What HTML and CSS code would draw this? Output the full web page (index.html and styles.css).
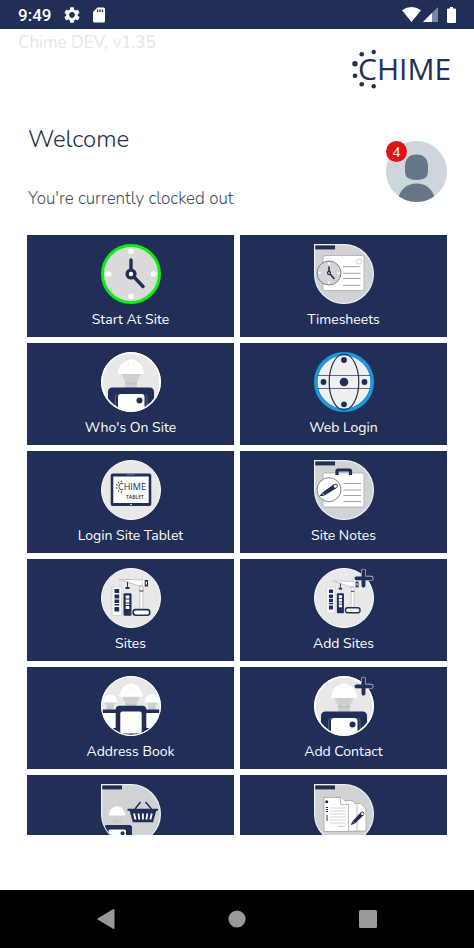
FILE: index.html
```html
<!DOCTYPE html>
<html lang="en">
<head>
    <meta charset="UTF-8">
    <meta name="viewport" content="width=device-width, initial-scale=1.0">
    <title>Chime</title>
    <link rel="stylesheet" href="styles.css">
</head>
<body>

<!-- Shared icon parts -->
<svg class="defs" width="0" height="0" aria-hidden="true">
    <defs>
        <clipPath id="round"><circle cx="30" cy="30" r="29"/></clipPath>
        <clipPath id="drop-clip"><path d="M1 1H30A29 29 0 1 1 1 30Z"/></clipPath>
        <symbol id="disc" viewBox="0 0 60 60">
            <circle cx="30" cy="30" r="29.5" fill="#e8e8e9" stroke="#fff"/>
        </symbol>
        <symbol id="drop" viewBox="0 0 60 60">
            <path d="M.6 .6H30A29.4 29.4 0 1 1 .6 30Z" fill="#d0d2d3" stroke="#eef3f8" stroke-width="1.2"/>
            <path d="M1.2 1.4H21V5.4H1.2Z" fill="#212f58"/>
        </symbol>
        <symbol id="plus" viewBox="0 0 60 60">
            <path d="M49.500 3.200V17.500M42.500 10.300H57" stroke="#cfd6e4" stroke-width="5" stroke-linecap="round"/>
            <path d="M49.500 3.200V17.500M42.500 10.300H57" stroke="#212f58" stroke-width="3.800" stroke-linecap="round"/>
        </symbol>
        <symbol id="head" viewBox="0 0 60 60">
            <path d="M20.500 21H39.500Q39 26 36 28.500V36H24V28.500Q21 26 20.500 21Z" fill="#cfd0d1"/>
            <path d="M24 28.500Q30 33 36 28.500V30.500Q30 35 24 30.500Z" fill="#c0c2c3"/>
            <path d="M17.500 19Q19 10.500 27 8Q30 6.500 33 8Q41 10.500 42.500 19L43.800 20.500Q43 22 41 22H19Q17 22 16.200 20.500Z" fill="#fff"/>
            <path d="M27.500 9.500V14M32.500 9.500V14" stroke="#e3e4e6" stroke-width=".5" fill="none"/>
        </symbol>
        <symbol id="worker" viewBox="0 0 60 60">
            <use href="#head"/>
            <path d="M7 60V40Q7 35.500 11.500 35.500H48.500Q53 35.500 53 40V60Z" fill="#212f58"/>
            <path d="M17 60V45Q17 42 20 42H40.500Q43.500 42 43.500 45V60Z" fill="#fff"/>
            <path d="M14.500 56V46Q14.500 43 16.500 42M46 56V46Q46 43 44.500 42" stroke="#7d87a1" stroke-width=".6" fill="none"/>
            <circle cx="38.500" cy="48.500" r="3" fill="#212f58"/>
        </symbol>
        <symbol id="site" viewBox="0 0 60 60">
            <path d="M11 18.500H20.500V47.500H11Z" fill="#fff" stroke="#b9bbc4" stroke-width=".5"/>
            <path d="M13.500 21H18.200V25H13.500ZM13.500 26.500H18.200V30.500H13.500ZM13.500 31.500H18.200V35H13.500ZM13.500 36H18.200V37.500H13.500ZM13.500 39H18.200V43.500H13.500Z" fill="#212f58"/>
            <rect x="22.500" y="25.300" width="8" height="22.500" rx="1" fill="#212f58"/>
            <path d="M24.700 27.500H28.300V30.500H24.700ZM24.700 31.500H28.300V34.500H24.700ZM24.700 35.500H28.300V37H24.700ZM24.700 38H28.300V41H24.700Z" fill="#fff"/>
            <path d="M38.700 18H42V41.500H38.700ZM18 11.300L42 12V18H38.500Z" fill="#fff" stroke="#a3a6b2" stroke-width=".6"/>
            <path d="M38.500 23H42.300M26.500 14V19" stroke="#212f58" stroke-width="1"/>
            <path d="M24.500 19H28.500V21H24.500Z" fill="#212f58"/>
            <path d="M42 12H44V18.500H42Z" fill="#fff"/>
            <path d="M43.700 12H47V18.500H43.700Z" fill="#212f58"/>
            <path d="M44.700 13.800H46V16.500H44.700Z" fill="#fff"/>
            <rect x="32.200" y="41.600" width="16.500" height="5.600" rx="2.500" fill="#fff" stroke="#212f58" stroke-width="1.600"/>
        </symbol>
        <symbol id="pen" viewBox="0 0 20 20">
            <path d="M1 19L3 14.500L14 2.500Q16 .8 18 2.500Q19.500 4.500 17.500 6.500L6 17.500Z" fill="#212f58"/>
            <circle cx="16" cy="4.500" r="1.700" fill="#fff"/>
            <path d="M3.500 14.500L6 17" stroke="#fff" stroke-width=".7"/>
        </symbol>
    </defs>
</svg>

<header class="status-bar">
    <span class="time">9:49</span>
    <svg width="16" height="16" viewBox="2 2 20 20" fill="#fff"><path d="M19.140 12.940c.04-.3.060-.61.060-.94 0-.32-.02-.64-.07-.94l2.030-1.580c.18-.14.230-.41.120-.61l-1.920-3.320c-.12-.22-.37-.29-.59-.22l-2.390.96c-.5-.38-1.030-.7-1.620-.94l-.36-2.540c-.04-.24-.24-.41-.48-.41h-3.840c-.24 0-.43.170-.47.410l-.36 2.540c-.59.240-1.130.570-1.620.940l-2.390-.96c-.22-.08-.47 0-.59.220L2.740 8.870c-.12.210-.08.470.12.610l2.030 1.580c-.05.300-.09.630-.09.940s.02.640.07.940l-2.030 1.580c-.18.140-.23.410-.12.610l1.920 3.320c.12.220.37.290.59.220l2.390-.96c.5.380 1.030.7 1.620.940l.36 2.540c.05.240.24.410.48.410h3.840c.24 0 .44-.17.470-.41l.36-2.540c.59-.24 1.130-.56 1.620-.94l2.390.96c.22.080.47 0 .59-.22l1.920-3.320c.12-.22.070-.47-.12-.61l-2.010-1.580zM12 15.600c-1.980 0-3.600-1.620-3.600-3.600s1.620-3.600 3.600-3.600 3.600 1.620 3.600 3.600-1.620 3.600-3.600 3.600z"/></svg>
    <svg width="12" height="16" viewBox="0 0 12 16"><path d="M4.500 .5H10.500Q12 .5 12 2V14Q12 15.500 10.500 15.500H1.500Q0 15.500 0 14V5Z" fill="#fff"/><path d="M4 2.500H5.300V5H4ZM6.400 2.500H7.700V5H6.400ZM8.800 2.500H10.100V5H8.800Z" fill="#212f58"/></svg>
    <div class="signals">
        <svg width="19" height="15" viewBox="0 0 19 15"><path d="M0 3.200Q9.500 -3 19 3.200L9.500 15Z" fill="#fff"/></svg>
        <svg width="15" height="15" viewBox="0 0 15 15"><path d="M15 0V15H0Z" fill="#7c86a0"/><path d="M9 6V15H0Z" fill="#fff"/></svg>
        <svg class="battery" width="9" height="16" viewBox="0 0 9 16"><path d="M3 0H6V1.600H8Q9 1.600 9 2.600V15Q9 16 8 16H1Q0 16 0 15V2.600Q0 1.600 1 1.600H3Z" fill="#fff"/></svg>
    </div>
</header>

<main>
    <div class="brand">
        <span class="version">Chime DEV, v1.35</span>
        <svg class="logo" width="104" height="42" viewBox="0 0 104 42" role="img" aria-label="Chime">
            <g fill="#212f58">
                <circle cx="23.700" cy="4" r="2.200"/>
                <circle cx="11.700" cy="6.300" r="2.300"/>
                <circle cx="5" cy="15.700" r="2.700"/>
                <circle cx="5" cy="27.700" r="2.300"/>
                <circle cx="11.700" cy="36.300" r="2.300"/>
                <circle cx="23.700" cy="38.300" r="2.200"/>
            </g>
            <text x="8" y="32">CHIME</text>
        </svg>
    </div>

    <section class="profile">
        <div>
            <h1>Welcome</h1>
            <p>You're currently clocked out</p>
        </div>
        <div class="avatar">
            <svg width="61" height="61" viewBox="0 0 61 61">
                <clipPath id="face"><circle cx="30.500" cy="30.500" r="30.500"/></clipPath>
                <g clip-path="url(#face)">
                    <path d="M0 0H61V61H0Z" fill="#ccd6db"/>
                    <path d="M19 26Q19 13.500 30.500 13.500T42 26V31Q42 39 30.500 39T19 31Z" fill="#657786"/>
                    <path d="M11 61Q15 42.500 30.500 42.500T50 61Z" fill="#657786"/>
                </g>
            </svg>
            <span class="badge">4</span>
        </div>
    </section>

    <div class="menu">
        <button class="tile" type="button">
            <svg viewBox="0 0 60 60">
                <circle cx="30" cy="30" r="28.500" fill="#dadada" stroke="#0bee14" stroke-width="3"/>
                <g fill="#fff"><circle cx="30" cy="7.500" r="2.800"/><circle cx="30" cy="52.500" r="2.800"/><circle cx="7.500" cy="30" r="2.800"/><circle cx="52.500" cy="30" r="2.800"/></g>
                <path d="M30 27V16M32 32L42 42.500" stroke="#212f58" stroke-width="3.400" stroke-linecap="round"/>
                <circle cx="30" cy="30" r="3.900" fill="#fff" stroke="#212f58" stroke-width="3.400"/>
            </svg>
            Start At Site
        </button>
        <button class="tile" type="button">
            <svg viewBox="0 0 60 60">
                <use href="#drop"/>
                <rect x="9" y="11.500" width="41" height="35" rx="2" fill="#fff" stroke="#a0a2a6" stroke-width=".7"/>
                <circle cx="45" cy="17.500" r="2.700" fill="#fff" stroke="#a0a2a6" stroke-width=".5"/>
                <path d="M29 22.700H46.500M29 29.300H46.500M29 34.500H46.500M29 41.300H46.500" stroke="#777b85" stroke-width=".7"/>
                <circle cx="15" cy="29" r="12" fill="#d3d4d6" stroke="#666a73" stroke-width=".8"/>
                <g fill="#fff"><circle cx="15" cy="19.500" r="1.200"/><circle cx="15" cy="38.500" r="1.200"/><circle cx="5.500" cy="29" r="1.200"/><circle cx="24.500" cy="29" r="1.200"/></g>
                <path d="M15 28V23M16 30L20 34.500" stroke="#212f58" stroke-width="1.600" stroke-linecap="round"/>
                <circle cx="15" cy="29" r="1.500" fill="#fff" stroke="#212f58" stroke-width="1.300"/>
            </svg>
            Timesheets
        </button>
        <button class="tile" type="button">
            <svg viewBox="0 0 60 60">
                <use href="#disc"/>
                <g clip-path="url(#round)"><use href="#worker"/></g>
                <circle cx="30" cy="30" r="29" fill="none" stroke="#fff" stroke-width="1.600"/>
            </svg>
            Who's On Site
        </button>
        <button class="tile" type="button">
            <svg viewBox="0 0 60 60">
                <circle cx="30" cy="30" r="28" fill="#efeff0" stroke="#1f97da" stroke-width="4"/>
                <circle cx="30" cy="30" r="25.800" fill="none" stroke="#fff" stroke-width=".8"/>
                <g fill="none" stroke="#212f58">
                    <path d="M4 23.500H56M4 36.500H56" stroke-width=".7"/>
                    <ellipse cx="30" cy="30" rx="14.800" ry="28" stroke-width="1.200"/>
                </g>
                <g fill="#212f58"><circle cx="30" cy="8" r="2.900"/><circle cx="30" cy="30" r="4.300"/><circle cx="9.500" cy="30" r="2.900"/><circle cx="50.500" cy="30" r="2.900"/><circle cx="30" cy="52.300" r="2.900"/></g>
            </svg>
            Web Login
        </button>
        <button class="tile" type="button">
            <svg viewBox="0 0 60 60">
                <use href="#disc"/>
                <rect x="9.700" y="13.500" width="40.600" height="32.500" rx="2" fill="#212f58"/>
                <path d="M12.300 16.500H47.700V43H12.300Z" fill="#fff"/>
                <path d="M26 14.800H34" stroke="#7c86a0" stroke-width=".7"/>
                <circle cx="30" cy="44.500" r=".8" fill="#fff"/>
                <g fill="#212f58"><circle cx="20.500" cy="21.500" r=".7"/><circle cx="17.500" cy="22.500" r=".7"/><circle cx="15.800" cy="25" r=".8"/><circle cx="15.800" cy="28" r=".7"/><circle cx="17.500" cy="31" r=".7"/><circle cx="20.500" cy="32" r=".7"/></g>
                <text class="tablet-name" x="17" y="30">CHIME</text>
                <text class="tablet-sub" x="25" y="39">TABLET</text>
            </svg>
            Login Site Tablet
        </button>
        <button class="tile" type="button">
            <svg viewBox="0 0 60 60">
                <use href="#drop"/>
                <rect x="9" y="13" width="41" height="34" rx="2" fill="#fff" stroke="#a0a2a6" stroke-width=".7"/>
                <path d="M23 15V11Q23 10 24 10H35.500Q36.500 10 36.500 11V15" fill="none" stroke="#212f58" stroke-width="3.200"/>
                <path d="M29.500 23.500H47M29.500 30H47M29.500 35.500H47M29.500 41.500H47" stroke="#777b85" stroke-width=".7"/>
                <circle cx="15" cy="29.700" r="12" fill="#fff" stroke="#666a73" stroke-width=".8"/>
                <use href="#pen" x="6" y="21" width="18" height="18" transform="rotate(12 15 30)"/>
            </svg>
            Site Notes
        </button>
        <button class="tile" type="button">
            <svg viewBox="0 0 60 60">
                <use href="#disc"/>
                <use href="#site"/>
            </svg>
            Sites
        </button>
        <button class="tile" type="button">
            <svg viewBox="0 0 60 60">
                <use href="#disc"/>
                <use href="#site" x="3" y="3" width="53" height="53"/>
                <use href="#plus"/>
            </svg>
            Add Sites
        </button>
        <button class="tile" type="button">
            <svg viewBox="0 0 60 60">
                <use href="#disc"/>
                <g clip-path="url(#round)">
                    <use href="#head" x="-8" y="14" width="34" height="34"/>
                    <use href="#head" x="34" y="14" width="34" height="34"/>
                    <use href="#head" x="3" y="1" width="54" height="54"/>
                    <path d="M0 37H60V60H0Z" fill="#fff"/>
                    <path d="M0 33.500H60V37H0ZM0 52H15V60H0ZM45 52H60V60H45Z" fill="#212f58"/>
                    <rect x="14.700" y="29.700" width="30.600" height="32" rx="4" fill="#212f58"/>
                    <rect x="19.300" y="35.500" width="21.400" height="22" rx="2" fill="#fff"/>
                </g>
                <circle cx="30" cy="30" r="29.300" fill="none" stroke="#fff" stroke-width="1"/>
            </svg>
            Address Book
        </button>
        <button class="tile" type="button">
            <svg viewBox="0 0 60 60">
                <use href="#disc"/>
                <g clip-path="url(#round)"><use href="#worker"/></g>
                <circle cx="30" cy="30" r="29" fill="none" stroke="#fff" stroke-width="1.600"/>
                <use href="#plus"/>
            </svg>
            Add Contact
        </button>
        <button class="tile" type="button" aria-label="Orders">
            <svg viewBox="0 0 60 60">
                <use href="#drop"/>
                <g clip-path="url(#drop-clip)">
                    <use href="#head" x="-3" y="17.500" width="38" height="38"/>
                    <rect x="3.500" y="41" width="27.500" height="24" rx="2.500" fill="#212f58"/>
                    <rect x="7.500" y="45.500" width="17.500" height="20" rx="1.500" fill="#fff"/>
                    <circle cx="21.500" cy="49.300" r="2" fill="#212f58"/>
                </g>
                <path d="M34 25L39.500 18M50.500 25L44.500 18" stroke="#212f58" stroke-width="1.500"/>
                <path d="M26.500 24.700H57V26.700H55.200L52 38.200H31.800L28.600 26.700H26.500Z" fill="#212f58"/>
                <path d="M33 29.500L34.500 35.500M37.500 29.500L38.300 35.500M41.900 29.500V35.500M46.300 29.500L45.500 35.500M50.800 29.500L49.300 35.500" stroke="#fff" stroke-width="1.800"/>
            </svg>
        </button>
        <button class="tile" type="button" aria-label="Documents">
            <svg viewBox="0 0 60 60">
                <use href="#drop"/>
                <g fill="#fff" stroke="#9a9da3" stroke-width=".7">
                    <path d="M36 19.500H47L52 25V47H36Z"/>
                    <path d="M28 16.500H38L43 21.500V47.300H28Z"/>
                    <path d="M10 13.500H26.500L34.500 20.500V47.500H10Z"/>
                    <path d="M26.500 13.500V20.500H34.500"/>
                </g>
                <circle cx="12.700" cy="17.700" r="1.500" fill="#212f58"/>
                <path d="M12 23.500H14M12 25.500H14M12 27.500H14M12 32H14M12 34H14M12 36H14" stroke="#212f58" stroke-width="1.200"/>
                <path d="M16 24H31.500M16 27H31.500M16 30H31.500M16 33H31.500M16 36H31.500M16 39H31.500M24 42.500H31.500" stroke="#b9bbc0" stroke-width=".6"/>
                <use href="#pen" x="36" y="26" width="15.500" height="16"/>
            </svg>
        </button>
    </div>
</main>

<footer class="nav-bar">
    <button type="button" aria-label="Back"><svg width="20" height="22" viewBox="0 0 20 22"><path d="M17.500 2V20L2.500 11Z" fill="#999" stroke="#999" stroke-width="2" stroke-linejoin="round"/></svg></button>
    <button type="button" aria-label="Home"><svg width="20" height="20" viewBox="0 0 20 20"><circle cx="10" cy="10" r="8.600" fill="#999"/></svg></button>
    <button type="button" aria-label="Recent apps"><svg width="20" height="20" viewBox="0 0 20 20"><rect x="1" y="1" width="18" height="18" rx="1.500" fill="#999"/></svg></button>
</footer>

</body>
</html>
```
FILE: styles.css
```css
* {
    box-sizing: border-box;
}

body {
    font-family: Nunito, Lato, sans-serif;
    background-color: #fff;
    color: #212f58;
    margin: 0;
    display: flex;
    flex-direction: column;
    height: 100vh;
}

svg {
    display: block;
}

.defs {
    position: absolute;
}

h1, p {
    margin: 0;
    font-weight: 300;
}

button {
    font-family: inherit;
    border: none;
    padding: 0;
    cursor: pointer;
}

/* Android status bar */
.status-bar {
    display: flex;
    align-items: center;
    height: 29px;
    padding: 0 18px;
    background-color: #212f58;
    color: #fff;
    flex-shrink: 0;
}

.time {
    font-family: Roboto, sans-serif;
    font-size: 17px;
    font-weight: 500;
    margin-right: 13px;
}

.status-bar > svg {
    margin-right: 13px;
}

.signals {
    display: flex;
    align-items: center;
    gap: 2px;
    margin-left: auto;
}

.battery {
    margin-left: 7px;
}

main {
    flex: 1;
    min-height: 0;
    display: flex;
    flex-direction: column;
    padding-bottom: 55px;
}

.brand {
    display: flex;
    justify-content: space-between;
    align-items: flex-start;
    padding: 0 20px 0 18px;
}

.version {
    color: #e6e6e6;
    font-size: 17px;
    line-height: 28px;
}

.logo {
    margin-top: 19px;
}

.logo text {
    font-family: "Open Sans", sans-serif;
    font-size: 30px;
    fill: #212f58;
}

.profile {
    display: flex;
    justify-content: space-between;
    align-items: flex-end;
    padding: 32px 27px 24px 28px;
}

h1 {
    font-size: 24px;
    line-height: 34px;
}

.profile p {
    margin-top: 31px;
    font-size: 17px;
    line-height: 24px;
    color: #465063;
}

.avatar {
    position: relative;
    margin-bottom: 9px;
}

.badge {
    position: absolute;
    top: 0;
    left: 0;
    width: 21px;
    height: 21px;
    border-radius: 50%;
    background-color: #dd1317;
    color: #fff;
    font-size: 14px;
    line-height: 23px;
    text-align: center;
}

/* Scrolling tile menu */
.menu {
    flex: 1;
    min-height: 0;
    display: grid;
    grid-template-columns: 1fr 1fr;
    grid-auto-rows: 102px;
    gap: 6px;
    margin: 0 27px;
    overflow-y: auto;
    scrollbar-width: none;
}

.tile {
    display: flex;
    flex-direction: column;
    align-items: center;
    gap: 6px;
    padding-top: 9px;
    background-color: #212f58;
    color: #fff;
    font-size: 14px;
    line-height: 20px;
}

.tile svg {
    width: 60px;
    height: 60px;
    flex-shrink: 0;
}

.tile text {
    fill: #212f58;
    font-family: "Open Sans", sans-serif;
}

.tile .tablet-name {
    font-size: 9px;
}

.tile .tablet-sub {
    font-size: 5px;
    font-weight: 600;
}

/* Android navigation bar */
.nav-bar {
    display: flex;
    justify-content: space-around;
    align-items: center;
    height: 58px;
    padding: 0 40px;
    background-color: #000;
    flex-shrink: 0;
}

.nav-bar button {
    background: none;
}
```
